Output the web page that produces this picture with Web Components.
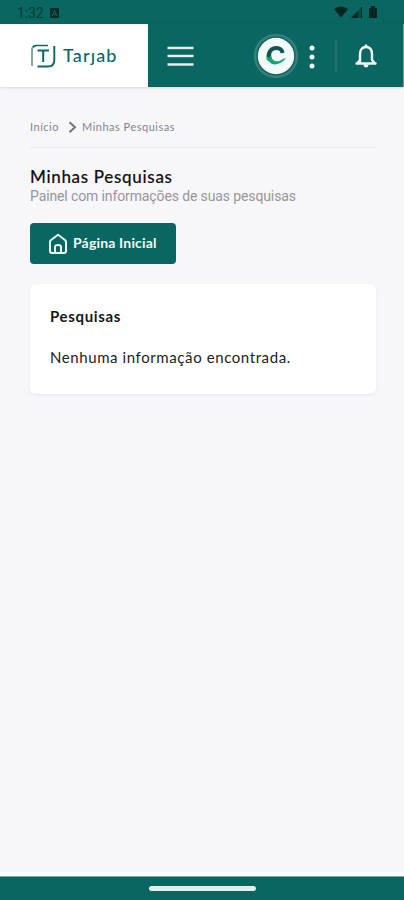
<!DOCTYPE html>
<html lang="pt-BR">
<head>
<meta charset="utf-8">
<title>Tarjab</title>
<style>
body{margin:0;background:#f7f7fa;font-family:Lato,"Noto Sans",sans-serif}
</style>
</head>
<body>
<tj-app></tj-app>
<script>
function define(name, html){
  const t=document.createElement('template');t.innerHTML=html;
  customElements.define(name,class extends HTMLElement{
    constructor(){super();this.attachShadow({mode:'open'}).append(t.content.cloneNode(true));}
  });
}
define('tj-status',`<style>
:host{display:flex;align-items:center;height:24px;box-sizing:border-box;padding:1px 26px 0 17px;background:#096660;color:#033c38;font:14px/22px Roboto,sans-serif}
span{letter-spacing:-.1px;width:33px}
.r{margin-left:auto}
svg{display:block}
</style><span>1:32</span>
<svg width="9" height="10" viewBox="0 0 9 10"><rect width="9" height="10" rx="1" fill="#042d2a"/><path d="M2.3 8L4.5 2.4L6.7 8M3.2 6.1h2.6" fill="none" stroke="#096660"/></svg>
<svg class="r" width="44" height="13" viewBox="0 0 44 13"><path d="M0 3Q7 -2 14 3L7 11.5Z" fill="#042622"/><path d="M17 12L28 1V12Z" fill="#064b45"/><path d="M17 12L24 5V12Z" fill="#042622"/><path d="M27.500 1V12" stroke="#042622"/><path d="M35 2h2V0h4v2h2v10h-8Z" fill="#042622"/></svg>`);
define('tj-logo',`<style>
:host{display:flex;align-items:center;width:148px;height:63px;box-sizing:border-box;padding-left:30px;background:#fff;color:#0b6862}
span{font:500 18px/24px Lato,sans-serif;letter-spacing:1.15px;margin:-2px 0 0 7px}
</style><svg width="26" height="24" viewBox="0 0 26 24" fill="none"><path d="M2 22V6Q2 2 6 2" stroke="#8ba6a2" stroke-width="2"/><path d="M3 3.200Q4 1.500 6 1.500H18" stroke="#0b6862" stroke-width="1.700"/><path d="M7.500 6.400H19M13.200 6.400V18" stroke="#0b6862" stroke-width="2"/><path d="M24.300 2V16Q24.300 22.500 18 22.500H7.500" stroke="#0b6862" stroke-width="1.900"/></svg><span>Tarȷab</span>`);
define('tj-avatar',`<style>
:host{display:block;width:46px;height:46px}svg{display:block}
</style><svg width="46" height="46" viewBox="0 0 46 46" fill="none"><circle cx="23" cy="23" r="22.300" fill="#328079"/><circle cx="23" cy="23" r="19.500" fill="#0d5e58"/><circle cx="23" cy="23" r="18.200" fill="#f1faf9"/><path d="M17 26.500C14.500 19 18 15 23.500 15C27 15 29 17 29.500 20" stroke="#11564e" stroke-width="4"/><path d="M13.500 23Q12.500 27 16 28.500C20 34 27 31.500 33 25.500C29 25.500 29 27.500 25 28.300Q20 29 17.500 23Z" fill="#12a775"/><path d="M13.500 23Q14 18 17 17.500V25Z" fill="#11564e"/></svg>`);
define('tj-header',`<style>
:host{display:flex;align-items:center;height:63px;background:#096660;box-shadow:0 1px 3px #00000020;border-right:1px solid #75a5a1;box-sizing:border-box}
svg{display:block;flex:none}
.menu{margin-left:19px}tj-avatar{margin-left:59px;flex:none}.dots{margin-left:9px}.sep{width:2px;height:34px;background:#1c716a;margin-left:19px}.bell{margin-left:17px}
</style><tj-logo></tj-logo>
<svg class="menu" width="27" height="22" viewBox="0 0 27 22"><path d="M0 4.500H27M0 12.500H27M0 20.500H27" stroke="#06514b" stroke-width="1"/><path d="M.5 3H26.500M.5 11H26.500M.5 19.500H26.500" stroke="#e4eeed" stroke-width="2.400"/></svg>
<tj-avatar></tj-avatar>
<svg class="dots" width="8" height="26" viewBox="0 0 8 26" fill="#eef8f7"><circle cx="4" cy="5" r="2.500"/><circle cx="4" cy="14" r="2.500"/><circle cx="4" cy="23" r="2.500"/></svg>
<div class="sep"></div>
<svg class="bell" width="24" height="26" viewBox="0 0 24 26" fill="none"><path d="M2.500 20.500H21.500M6 20V11.500Q6 4 12 4T18 11.500V17L20.500 20M6 17L3.500 20" stroke="#f1f8f7" stroke-width="2.400" stroke-linecap="round" stroke-linejoin="round"/><path d="M12 1.500V4" stroke="#f1f8f7" stroke-width="2.500"/><path d="M9.500 21.500H14.500Q14.500 24.500 12 24.500T9.500 21.500Z" fill="#f1f8f7"/></svg>`);
define('tj-crumbs',`<style>
:host{display:flex;align-items:center;height:41px;border-bottom:1px solid #e7e8eb;box-sizing:border-box;color:#858588;font:11px/16px Lato,sans-serif}
span{margin-top:-1px}
.a{width:38px;letter-spacing:.5px}.b{letter-spacing:.5px;margin-left:5px;white-space:nowrap}
</style><span class="a">Início</span><svg width="9" height="12" viewBox="0 0 9 12"><path d="M1.500 1.200L7 6.200L1.500 11.200" fill="none" stroke="#737376" stroke-width="2"/></svg><span class="b">Minhas Pesquisas</span>`);
define('tj-heading',`<style>
:host{display:block;padding-top:18px}
h1{margin:0;font:500 17px/22px Lato,sans-serif;letter-spacing:.68px;color:#111;-webkit-text-stroke:.15px #111}
p{margin:-1px 0 0;font:14px/18px Roboto,sans-serif;letter-spacing:-.12px;color:#96969a}
</style><h1><slot name="title"></slot></h1><p><slot></slot></p>`);
define('tj-button',`<style>
:host{display:flex;align-items:center;width:146px;height:41px;box-sizing:border-box;padding-left:18px;background:#096660;border-radius:4px;color:#f2f8f7;font:700 14px/20px Lato,sans-serif;letter-spacing:.17px;margin-top:18px;white-space:nowrap}
span{margin:-2px 0 0 5px}
</style><svg width="20" height="22" viewBox="0 0 20 22" fill="none" stroke="#edf6f5" stroke-width="2" stroke-linejoin="round"><path d="M2 9Q2 8 3 7L10 1.800L17 7Q18 8 18 9V18Q18 20 16 20H4Q2 20 2 18Z"/><path d="M7 20V14Q7 12 10 12T13 14V20"/></svg><span><slot></slot></span>`);
define('tj-card',`<style>
:host{display:block;height:110px;box-sizing:border-box;padding:22px 20px;margin-top:20px;background:#fff;border-radius:6px;box-shadow:0 1px 3px #00000010;color:#222}
h2{margin:0 0 21px;font:700 15px/20px Lato,sans-serif;letter-spacing:.65px;color:#161616}
p{margin:0;font:15px/20px Lato,sans-serif;letter-spacing:.59px;white-space:nowrap}
</style><h2><slot name="title"></slot></h2><p><slot></slot></p>`);
define('tj-nav',`<style>
:host{display:flex;justify-content:center;align-items:center;height:28px;box-sizing:border-box;border-top:4px solid #fff;background:#096660;box-shadow:inset 0 1px #7fa5a2;padding-top:1px}
i{width:107px;height:5px;border-radius:3px;background:#e3efee}
</style><i></i>`);
define('tj-app',`<style>
:host{display:flex;flex-direction:column;height:900px;background:#f7f7fa;overflow:hidden}
main{flex:1;padding:20px 28px 0 30px}
</style><tj-status></tj-status><tj-header></tj-header>
<main><tj-crumbs></tj-crumbs>
<tj-heading><span slot="title">Minhas Pesquisas</span>Painel com informações de suas pesquisas</tj-heading>
<tj-button>Página Inicial</tj-button>
<tj-card><span slot="title">Pesquisas</span>Nenhuma informação encontrada.</tj-card></main>
<tj-nav></tj-nav>`);
</script>
</body>
</html>
